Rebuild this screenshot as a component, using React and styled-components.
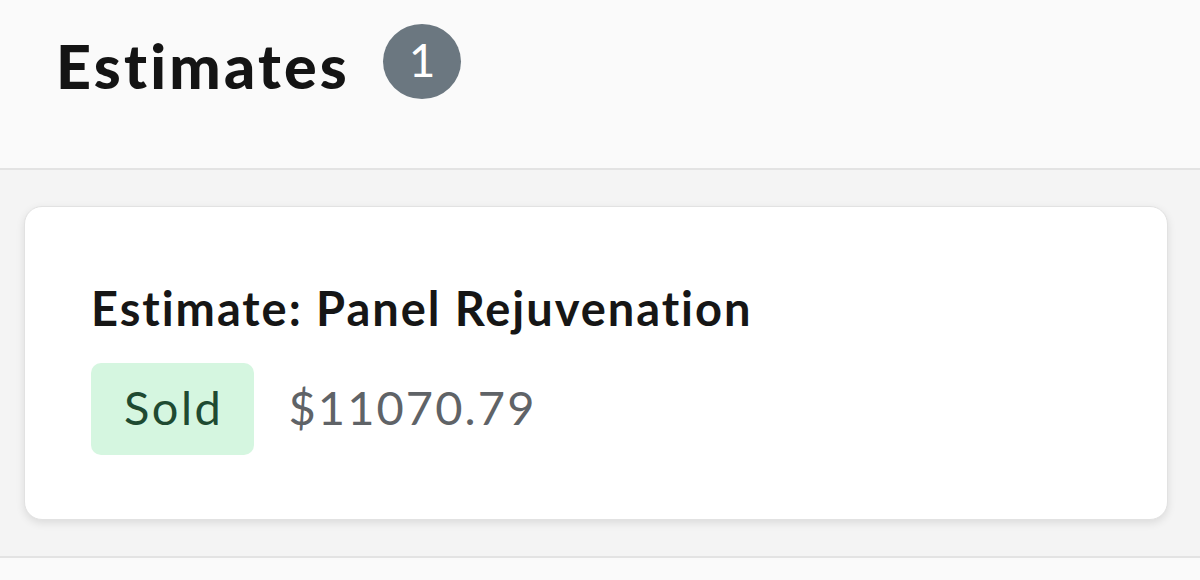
import React from "react";
import styled, { createGlobalStyle } from "styled-components";

const Global = createGlobalStyle`
  html, body { margin: 0; padding: 0; background: #fafafa; }
  body { font-family: "Lato", "Noto Sans", sans-serif; }
  * { box-sizing: border-box; }
`;

const Page = styled.div`
  width: 1200px;
  height: 580px;
  background: #fafafa;
  display: flex;
  flex-direction: column;
`;

const Header = styled.header`
  height: 170px;
  flex-shrink: 0;
  display: flex;
  align-items: flex-start;
  gap: 33px;
  padding: 24px 0 0 56px;
  background: #fafafa;
  border-bottom: 2px solid #e3e3e3;
`;

const Title = styled.h1`
  margin: 6px 0 0;
  font-family: "Lato", sans-serif;
  font-weight: 900;
  font-size: 61px;
  line-height: 72px;
  color: #141414;
  letter-spacing: 3.2px;
`;

const CountBadge = styled.span`
  width: 78px;
  height: 75px;
  border-radius: 50%;
  background: #6b7780;
  color: #ffffff;
  display: flex;
  align-items: center;
  justify-content: center;
  font-family: "Lato", sans-serif;
  font-size: 46px;
  font-weight: 400;
  line-height: 1;
  padding-bottom: 4px;
`;

const Body = styled.main`
  background: #f4f4f4;
  padding: 36px 32px 36px 24px;
  border-bottom: 2px solid #e3e3e3;
`;

const Card = styled.section`
  background: #ffffff;
  border: 1px solid #e2e2e2;
  border-radius: 18px;
  box-shadow: 0 3px 8px rgba(0, 0, 0, 0.1);
  padding: 73px 66px 64px;
  display: flex;
  flex-direction: column;
  gap: 27px;
`;

const CardTitle = styled.h2`
  margin: 0;
  font-family: "Lato", sans-serif;
  font-weight: 700;
  font-size: 47px;
  line-height: 56px;
  letter-spacing: 1.95px;
  color: #161616;
`;

const Row = styled.div`
  display: flex;
  align-items: center;
  gap: 34px;
`;

const Status = styled.span`
  height: 92px;
  display: flex;
  align-items: center;
  padding: 0 31px 4px 33px;
  border-radius: 10px;
  background: ${(p) => p.$bg};
  color: ${(p) => p.$fg};
  font-family: "Lato", sans-serif;
  font-size: 47px;
  line-height: 56px;
  letter-spacing: 2.5px;
  font-weight: 400;
`;

const Price = styled.span`
  font-family: "Lato", sans-serif;
  font-size: 47px;
  line-height: 56px;
  letter-spacing: 2.1px;
  color: #5f6367;
  padding-bottom: 4px;
`;

export default function App() {
  return (
    <>
      <Global />
      <Page>
        <Header>
          <Title>Estimates</Title>
          <CountBadge>1</CountBadge>
        </Header>
        <Body>
          <Card>
            <CardTitle>Estimate: Panel Rejuvenation</CardTitle>
            <Row>
              <Status $bg="#d5f6e0" $fg="#1e4a31">Sold</Status>
              <Price>$11070.79</Price>
            </Row>
          </Card>
        </Body>
      </Page>
    </>
  );
}
